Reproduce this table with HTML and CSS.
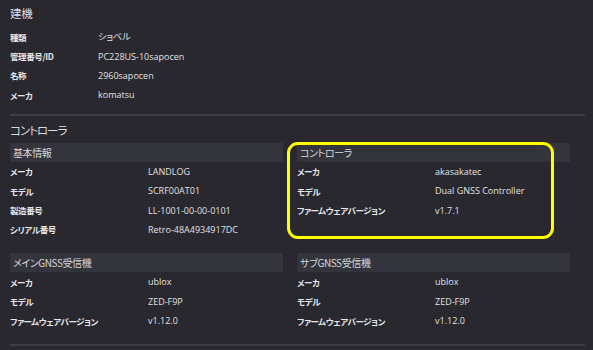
FILE: index.html
```html
<!DOCTYPE html>
<html lang="ja">
<head>
<meta charset="utf-8">
<link rel="stylesheet" href="styles.css">
</head>
<body>
<div class="page">
  <section class="block">
    <h2 class="title">建機</h2>
    <div class="kv kv-top">
      <div class="k">種類</div><div class="v">ショベル</div>
      <div class="k">管理番号/ID</div><div class="v">PC228US-10sapocen</div>
      <div class="k">名称</div><div class="v">2960sapocen</div>
      <div class="k">メーカ</div><div class="v">komatsu</div>
    </div>
  </section>
  <div class="divider"></div>
  <section class="block">
    <h2 class="title title-2">コントローラ</h2>
    <div class="grid">
      <div class="card">
        <h3 class="bar">基本情報</h3>
        <div class="kv">
          <div class="k">メーカ</div><div class="v">LANDLOG</div>
          <div class="k">モデル</div><div class="v">SCRF00AT01</div>
          <div class="k">製造番号</div><div class="v">LL-1001-00-00-0101</div>
          <div class="k">シリアル番号</div><div class="v">Retro-48A4934917DC</div>
        </div>
      </div>
      <div class="card">
        <h3 class="bar">コントローラ</h3>
        <div class="kv">
          <div class="k">メーカ</div><div class="v">akasakatec</div>
          <div class="k">モデル</div><div class="v">Dual GNSS Controller</div>
          <div class="k">ファームウェアバージョン</div><div class="v">v1.7.1</div>
        </div>
      </div>
      <div class="card">
        <h3 class="bar">メインGNSS受信機</h3>
        <div class="kv">
          <div class="k">メーカ</div><div class="v">ublox</div>
          <div class="k">モデル</div><div class="v">ZED-F9P</div>
          <div class="k">ファームウェアバージョン</div><div class="v">v1.12.0</div>
        </div>
      </div>
      <div class="card">
        <h3 class="bar">サブGNSS受信機</h3>
        <div class="kv">
          <div class="k">メーカ</div><div class="v">ublox</div>
          <div class="k">モデル</div><div class="v">ZED-F9P</div>
          <div class="k">ファームウェアバージョン</div><div class="v">v1.12.0</div>
        </div>
      </div>
    </div>
  </section>
  <div class="divider"></div>
  <div class="highlight"></div>
</div>
</body>
</html>
```
FILE: styles.css
```css
html, body {
  margin: 0;
  padding: 0;
  background: #28282e;
}
body {
  font-family: "Noto Sans CJK JP", "Open Sans", sans-serif;
  color: #e2e2e6;
  font-feature-settings: "palt";
}
.page {
  position: relative;
  width: 593px;
  height: 350px;
  overflow: hidden;
  padding: 0 8px 0 10px;
  box-sizing: border-box;
}
.title {
  margin: 0;
  height: 27px;
  line-height: 26px;
  font-size: 11.5px;
  font-weight: 400;
  letter-spacing: -0.3px;
  color: #dcdce0;
}
.title-2 {
  height: 27px;
  line-height: 28px;
  font-size: 11.5px;
  letter-spacing: -1px;
}
.kv {
  display: grid;
  grid-template-columns: 138px 1fr;
  grid-auto-rows: 19.4px;
  align-items: center;
  font-size: 8.5px;
}
.kv-top {
  grid-template-columns: 88px 1fr;
  margin-bottom: 9px;
}
.k {
  font-weight: 700;
  letter-spacing: -0.4px;
  color: #e6e6ea;
}
.v {
  color: #e0e0e4;
  font-family: "Open Sans", "Noto Sans CJK JP", sans-serif;
  font-size: 9px;
}
.divider {
  height: 2px;
  background: #3f3e45;
  width: 575px;
}
.grid {
  display: grid;
  grid-template-columns: 287px 287px;
  row-gap: 14px;
  margin-bottom: 14px;
}
.card {
  padding-right: 14px;
}
.bar {
  margin: 0;
  height: 19px;
  line-height: 19px;
  padding-left: 3px;
  background: #34343c;
  font-size: 10px;
  font-weight: 400;
  letter-spacing: -0.4px;
  color: #d6d6da;
}
.highlight {
  position: absolute;
  left: 287px;
  top: 142px;
  width: 267px;
  height: 97px;
  box-sizing: border-box;
  border: 3px solid #ffff00;
  border-radius: 11px;
}
```
